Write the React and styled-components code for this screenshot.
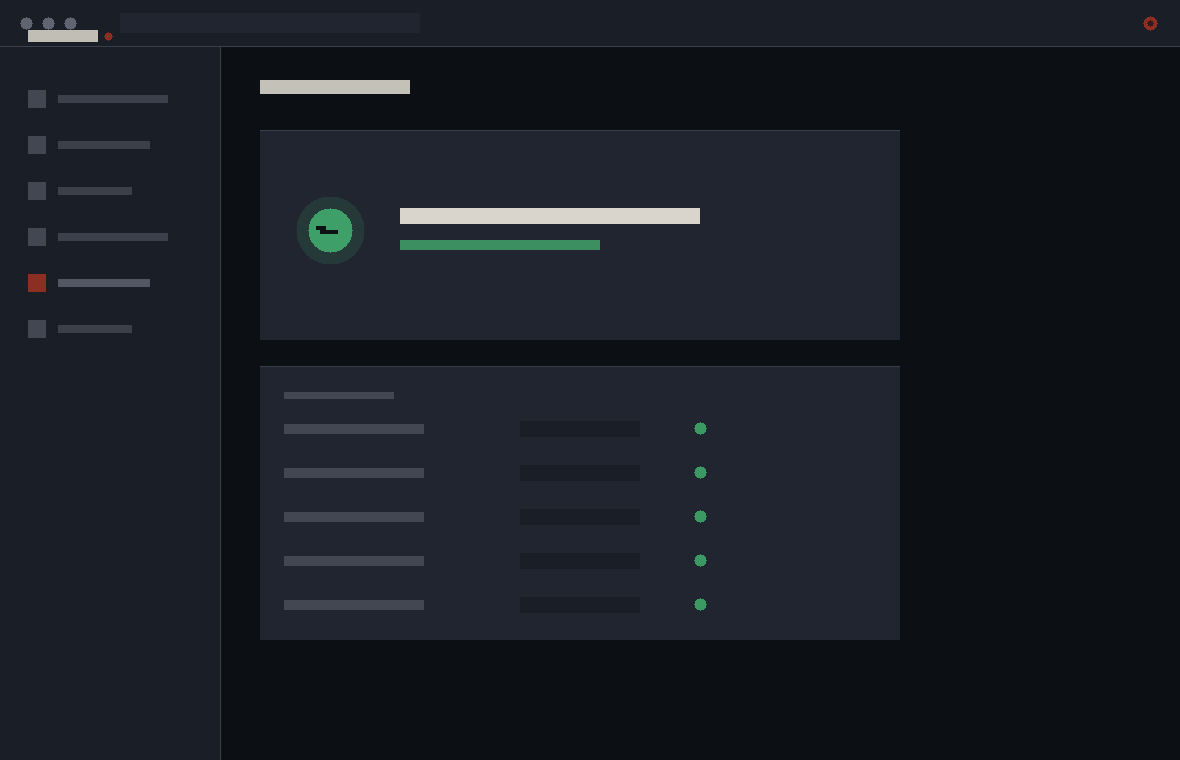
import React from "react";
import styled, { createGlobalStyle, ThemeProvider } from "styled-components";

const theme = {
  page: "#0c0f13",
  chrome: "#1a1e26",
  panel: "#21252f",
  line: "#3a3f4b",
  muted: "#3c404a",
  soft: "#434751",
  strong: "#525763",
  dot: "#5f6470",
  red: "#8c2f23",
  redDark: "#35191b",
  green: "#3f9f68",
  greenDot: "#3d9964",
  greenBar: "#3b8f60",
  halo: "#253938",
  brand: "#c1beb5",
  title: "#c4c2b8",
  headline: "#d9d4cc",
  ink: "#0c1114",
};

const GlobalStyle = createGlobalStyle`
  *, *::before, *::after { box-sizing: border-box; }
  body {
    margin: 0;
    background: ${theme.page};
    font-family: Inter, "Liberation Sans", sans-serif;
  }
`;

const Shell = styled.div`
  position: relative;
  display: flex;
  flex-direction: column;
  min-height: 100vh;
`;

const TopBar = styled.header`
  display: flex;
  align-items: center;
  height: 47px;
  padding: 0 22px 0 20px;
  background: ${(p) => p.theme.chrome};
  border-bottom: 1px solid ${(p) => p.theme.line};
`;

const WindowDots = styled.div`
  display: flex;
  gap: 9px;
  width: 100px;
  padding-top: 1px;
`;

const Search = styled.input`
  width: 300px;
  height: 20px;
  padding: 0 8px;
  border: 0;
  border-radius: 0;
  outline: 0;
  background: ${(p) => p.theme.panel};
  color: ${(p) => p.theme.headline};
  font: inherit;
  font-size: 12px;
`;

const AccountButton = styled.button`
  display: flex;
  margin-left: auto;
  padding: 1px 0 0;
  border: 0;
  background: none;
  cursor: pointer;
`;

const Brand = styled.div`
  position: absolute;
  top: 30px;
  left: 28px;
  display: flex;
  align-items: flex-end;
  gap: 6px;
  height: 12px;
`;

const BrandDot = styled.span`
  display: flex;
  align-self: center;
  padding-top: 1px;
`;

const Bar = styled.span`
  display: block;
  flex: none;
  width: ${(p) => p.$width}px;
  max-width: 100%;
  height: ${(p) => p.$height}px;
  background: ${(p) => p.theme[p.$tone]};
`;

const Body = styled.div`
  display: flex;
  flex: 1;
`;

const Sidebar = styled.nav`
  display: flex;
  flex: none;
  flex-direction: column;
  gap: 28px;
  width: 221px;
  padding: 43px 28px;
  background: ${(p) => p.theme.chrome};
  border-right: 1px solid ${(p) => p.theme.line};
`;

const NavLink = styled.a`
  display: flex;
  align-items: center;
  gap: 12px;
  height: 18px;
`;

const NavIcon = styled.span`
  width: 18px;
  height: 18px;
  background: ${(p) => (p.$active ? p.theme.red : p.theme.soft)};
`;

const Main = styled.main`
  flex: 1;
  min-width: 0;
  padding: 33px 39px;
`;

const PageTitle = styled.h1`
  margin: 0 0 36px;
`;

const Panel = styled.section`
  width: 100%;
  max-width: 640px;
  background: ${(p) => p.theme.panel};
  border-top: 1px solid ${(p) => p.theme.line};
`;

const StatusPanel = styled(Panel)`
  display: flex;
  gap: 35px;
  padding: 65px 36px 75px;
  margin-bottom: 26px;
`;

const StatusText = styled.div`
  display: flex;
  flex-direction: column;
  gap: 16px;
  min-width: 0;
  padding-top: 12px;
`;

const ChecksPanel = styled(Panel)`
  padding: 25px 24px 27px;
`;

const PanelTitle = styled.h2`
  margin: 0 0 22px;
`;

const CheckList = styled.ul`
  display: flex;
  flex-direction: column;
  gap: 28px;
  margin: 0;
  padding: 0;
  list-style: none;
`;

const CheckRow = styled.li`
  display: grid;
  grid-template-columns: 236px 120px auto;
  align-items: center;
  height: 16px;
`;

const Field = styled.input`
  width: 120px;
  height: 16px;
  padding: 0 6px;
  border: 0;
  border-radius: 0;
  outline: 0;
  background: ${(p) => p.theme.chrome};
  color: ${(p) => p.theme.headline};
  font: inherit;
  font-size: 10px;
`;

const CheckState = styled.span`
  display: flex;
  padding: 0 0 1px 54px;
`;

const Drawing = styled.svg`
  display: block;
  flex: none;
  shape-rendering: crispEdges;
`;

// One-pixel-high spans that fill a disc of radius r around the pixel (c, c).
function discPath(r, c = r) {
  let d = "";
  for (let y = -r; y <= r; y += 1) {
    const x = Math.floor(Math.sqrt(r * r - y * y));
    d += `M${c - x} ${c + y}h${2 * x + 1}v1h-${2 * x + 1}z`;
  }
  return d;
}

function Disc({ r, color, children }) {
  const size = 2 * r + 1;
  return (
    <Drawing width={size} height={size} viewBox={`0 0 ${size} ${size}`} aria-hidden="true">
      <path d={discPath(r)} fill={color} />
      {children}
    </Drawing>
  );
}

const navItems = [
  { id: "overview", width: 110 },
  { id: "activity", width: 92 },
  { id: "files", width: 74 },
  { id: "network", width: 110 },
  { id: "health", width: 92, active: true },
  { id: "settings", width: 74 },
];

const checks = [1, 2, 3, 4, 5];

export default function App() {
  return (
    <ThemeProvider theme={theme}>
      <GlobalStyle />
      <Shell>
        <TopBar>
          <WindowDots>
            <Disc r={6} color={theme.dot} />
            <Disc r={6} color={theme.dot} />
            <Disc r={6} color={theme.dot} />
          </WindowDots>
          <Search type="text" aria-label="Search" />
          <AccountButton type="button" aria-label="Account">
            <Disc r={7} color={theme.red}>
              <path d={discPath(3, 7)} fill={theme.redDark} />
            </Disc>
          </AccountButton>
        </TopBar>
        <Brand>
          <Bar $width={70} $height={12} $tone="brand" />
          <BrandDot>
            <Disc r={4} color={theme.red} />
          </BrandDot>
        </Brand>
        <Body>
          <Sidebar aria-label="Sections">
            {navItems.map((item) => (
              <NavLink
                key={item.id}
                href={`#${item.id}`}
                aria-label={item.id}
                aria-current={item.active ? "page" : undefined}
              >
                <NavIcon $active={item.active} />
                <Bar $width={item.width} $height={8} $tone={item.active ? "strong" : "muted"} />
              </NavLink>
            ))}
          </Sidebar>
          <Main>
            <PageTitle aria-label="Health">
              <Bar $width={150} $height={14} $tone="title" />
            </PageTitle>
            <StatusPanel>
              <Disc r={34} color={theme.halo}>
                <path d={discPath(22, 34)} fill={theme.green} />
                <path d="M20 30h10v4h12v4H24v-4h-4z" fill={theme.ink} />
              </Disc>
              <StatusText>
                <Bar $width={300} $height={16} $tone="headline" />
                <Bar $width={200} $height={10} $tone="greenBar" />
              </StatusText>
            </StatusPanel>
            <ChecksPanel>
              <PanelTitle aria-label="Checks">
                <Bar $width={110} $height={7} $tone="soft" />
              </PanelTitle>
              <CheckList>
                {checks.map((n) => (
                  <CheckRow key={n}>
                    <label htmlFor={`check-${n}`}>
                      <Bar $width={140} $height={10} $tone="soft" />
                    </label>
                    <Field id={`check-${n}`} type="text" aria-label={`Check ${n}`} />
                    <CheckState>
                      <Disc r={6} color={theme.greenDot} />
                    </CheckState>
                  </CheckRow>
                ))}
              </CheckList>
            </ChecksPanel>
          </Main>
        </Body>
      </Shell>
    </ThemeProvider>
  );
}
